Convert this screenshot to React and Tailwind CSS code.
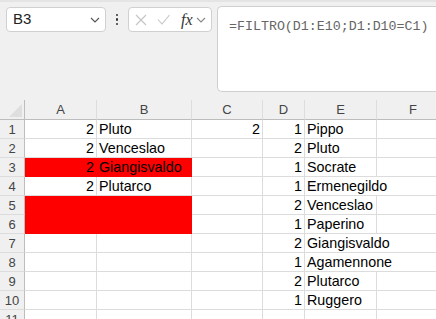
import React from 'react';

const cols = ['A', 'B', 'C', 'D', 'E', 'F'];

// over: text in E spills into the empty F cell
const rows = [
  { a: '2', b: 'Pluto', c: '2', d: '1', e: 'Pippo' },
  { a: '2', b: 'Venceslao', d: '2', e: 'Pluto' },
  { a: '2', b: 'Giangisvaldo', d: '1', e: 'Socrate', red: true },
  { a: '2', b: 'Plutarco', d: '1', e: 'Ermenegildo', over: true },
  { d: '2', e: 'Venceslao', red: true },
  { d: '1', e: 'Paperino', red: true },
  { d: '2', e: 'Giangisvaldo', over: true },
  { d: '1', e: 'Agamennone', over: true },
  { d: '2', e: 'Plutarco' },
  { d: '1', e: 'Ruggero' },
  {},
];

const Chevron = ({ className }) => (
  <svg className={className} width="10" height="6" viewBox="0 0 10 6" fill="none" stroke="currentColor" strokeWidth="1.1">
    <path d="M1 1l4 4 4-4" />
  </svg>
);

const Cell = ({ children, right, red, noRight }) => (
  <div
    className={`h-[19px] leading-[18px] px-[2px] whitespace-nowrap border-b ${noRight ? '' : 'border-r'} ${
      red ? 'bg-[#ff0000] border-[#ff0000]' : 'border-[#dcdcdc]'
    } ${right ? 'text-right' : 'text-left'}`}
  >
    {children}
  </div>
);

export default function App() {
  return (
    <div className="w-[436px] h-[319px] overflow-hidden bg-[#f0f0f0] flex flex-col" style={{ fontFamily: '"Liberation Sans", Arial, sans-serif' }}>
      <div className="h-[100px] shrink-0 border-t-2 border-[#e4e4e4]">
        <div className="flex items-start pt-[5px]">
          <div className="ml-[6px] w-[100px] h-[25px] bg-white border border-[#d0d0d0] rounded-[4px] flex items-center justify-between pl-[6px] pr-[5px]">
            <span className="text-[15px] text-[#222]">B3</span>
            <Chevron className="text-[#555]" />
          </div>
          <div className="w-[22px] h-[25px] flex flex-col items-center justify-center gap-[2px]">
            <span className="w-[2.5px] h-[2.5px] rounded-full bg-[#333]" />
            <span className="w-[2.5px] h-[2.5px] rounded-full bg-[#333]" />
            <span className="w-[2.5px] h-[2.5px] rounded-full bg-[#333]" />
          </div>
          <div className="w-[84px] h-[25px] bg-white border border-[#d0d0d0] rounded-[4px] flex items-center pl-[6px] pr-[3px]">
            <svg width="12" height="12" viewBox="0 0 12 12" stroke="#c4c4c4" strokeWidth="1.1" fill="none">
              <path d="M1 1l10 10M11 1L1 11" />
            </svg>
            <svg className="ml-[10px]" width="13" height="11" viewBox="0 0 13 11" stroke="#c4c4c4" strokeWidth="1.1" fill="none">
              <path d="M1 5.5l4 4.5 7.5-9" />
            </svg>
            <span className="ml-[11px] text-[16px] italic text-[#333] leading-none" style={{ fontFamily: '"Liberation Serif", serif' }}>
              fx
            </span>
            <Chevron className="ml-[3px] text-[#888]" />
          </div>
          <div className="ml-[5px] -mt-[1px] flex-1 h-[86px] bg-white border border-[#cfcfcf] rounded-l-[5px] border-r-0 pl-[11px] pt-[6px]">
            <span className="text-[13.3px] text-[#666]" style={{ fontFamily: '"Liberation Mono", monospace' }}>
              =FILTRO(D1:E10;D1:D10=C1)
            </span>
          </div>
        </div>
      </div>

      <div className="grid grid-cols-[25px_72px_95px_71px_42px_72px_72px] text-[14.3px] text-black bg-white">
        <div className="h-[20px] border-r border-b border-[#bdbdbd] bg-[#f0f0f0] relative">
          <svg className="absolute left-[9px] top-[4px]" width="13" height="13" viewBox="0 0 13 13">
            <path d="M13 0V13H0Z" fill="#dedede" />
          </svg>
        </div>
        {cols.map((c, i) => (
          <div
            key={c}
            className={`h-[20px] border-b border-[#bdbdbd] bg-[#f0f0f0] text-center text-[13px] leading-[20px] text-[#444] ${
              i < cols.length - 1 ? 'border-r-[#dddddd] border-r' : ''
            }`}
          >
            {c}
          </div>
        ))}

        {rows.map((r, i) => (
          <React.Fragment key={i}>
            <div className="h-[19px] border-r border-b border-r-[#bdbdbd] border-b-[#dcdcdc] bg-[#f0f0f0] text-center text-[13px] leading-[19px] text-[#444]">
              {i + 1}
            </div>
            <Cell right red={r.red}>{r.a}</Cell>
            <Cell red={r.red}>{r.b}</Cell>
            <Cell right>{r.c}</Cell>
            <Cell right>{r.d}</Cell>
            <Cell noRight={r.over}>{r.e}</Cell>
            <Cell noRight />
          </React.Fragment>
        ))}
      </div>
    </div>
  );
}
